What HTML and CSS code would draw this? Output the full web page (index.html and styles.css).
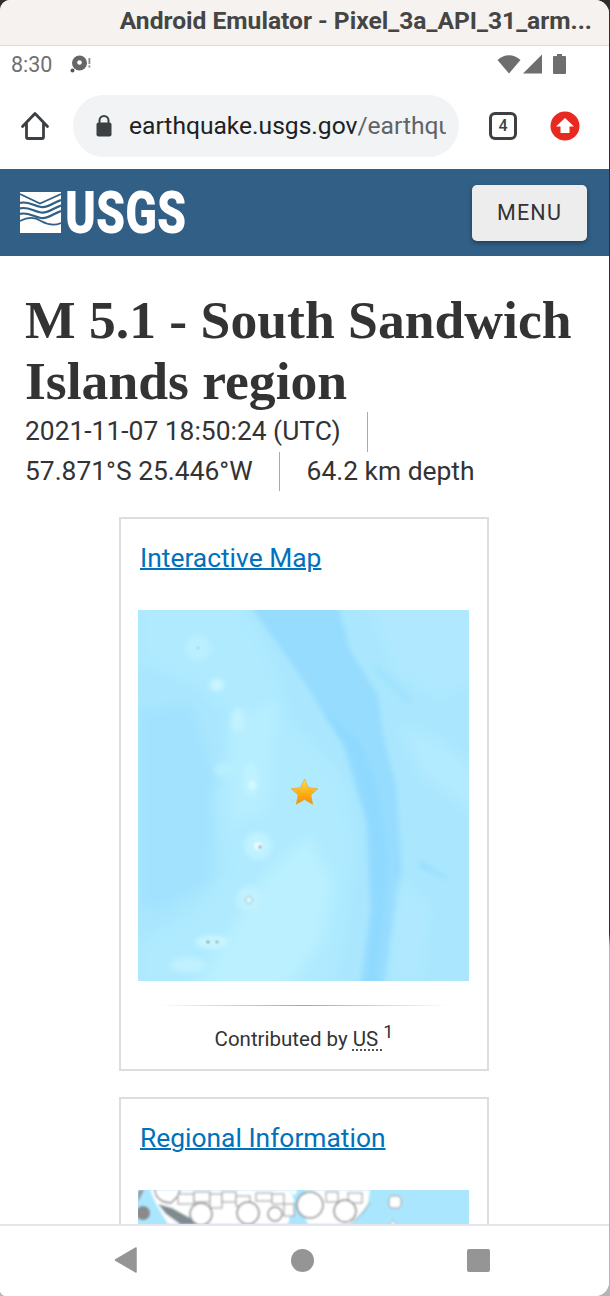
FILE: index.html
```html
<!DOCTYPE html>
<html lang="en">
<head>
<meta charset="utf-8">
<title>M 5.1 - South Sandwich Islands region</title>
<link rel="stylesheet" href="styles.css">
</head>
<body>
<div class="window">
  <div class="titlebar"><span class="title-text">Android Emulator - Pixel_3a_API_31_arm...</span></div>
  <div class="statusbar">
    <span class="clock">8:30</span>
    <svg class="debug-icon" width="22" height="18" viewBox="0 0 22 18"><circle cx="9.500" cy="8" r="7.500" fill="#666"/><circle cx="9.500" cy="7.500" r="2.300" fill="#fff"/><circle cx="2.500" cy="15.500" r="2" fill="#555"/><rect x="18.500" y="3" width="1.800" height="6" fill="#888"/><rect x="18.500" y="10.500" width="1.800" height="2" fill="#888"/></svg>
    <span class="status-spacer"></span>
    <svg class="wifi-icon" width="24" height="20" viewBox="0 0 24 20"><path d="M0.500 6 C7 -0.500 17 -0.500 23.500 6 L12 19.500 Z" fill="#6e6e6e"/></svg>
    <svg class="signal-icon" width="20" height="20" viewBox="0 0 20 20"><path d="M0 19.500 L19 0.500 V19.500 Z" fill="#6e6e6e"/></svg>
    <svg class="battery-icon" width="13" height="20" viewBox="0 0 13 20"><path d="M4 0 H9 V2 H12 a1 1 0 0 1 1 1 V19 a1 1 0 0 1 -1 1 H1 a1 1 0 0 1 -1 -1 V3 a1 1 0 0 1 1 -1 H4 Z" fill="#6e6e6e"/></svg>
  </div>
  <div class="toolbar">
    <svg class="home-icon" width="30" height="30" viewBox="0 0 30 30"><path d="M2.500 15.500 L15 2.500 L27.500 15.500 M6.500 12.500 V26 a1.500 1.500 0 0 0 1.500 1.500 H22 a1.500 1.500 0 0 0 1.500 -1.500 V12.500" fill="none" stroke="#3c4043" stroke-width="2.800" stroke-linejoin="round" stroke-linecap="round"/></svg>
    <div class="urlbar">
      <svg class="lock-icon" width="16" height="24" viewBox="0 0 16 24"><path d="M3.500 9 V6.500 a4.500 4.500 0 0 1 9 0 V9" fill="none" stroke="#3c4043" stroke-width="2"/><rect x="0.500" y="8.500" width="15" height="14" rx="2" fill="#3c4043"/></svg>
      <span class="url"><span class="url-host">earthquake.usgs.gov</span><span class="url-path">/earthquake</span></span>
    </div>
    <div class="tabs"><span>4</span></div>
    <svg class="update-icon" width="30" height="30" viewBox="0 0 30 30"><circle cx="15" cy="15" r="14.500" fill="#e8291f"/><path d="M15 7 L24 15.500 H19.500 V22 H10.500 V15.500 H6 Z" fill="#fff"/></svg>
  </div>
  <header class="usgs-bar">
    <div class="logo">
      <svg class="logo-mark" width="41" height="41" viewBox="0 0 41 41">
        <rect width="41" height="41" fill="#fff"/>
        <g fill="none" stroke="#315f85">
          <path d="M0 2 L20 11.500 L41 2" stroke-width="1.600"/>
          <path d="M0 11 C8 8.500 13 14 21 15 C29 16 34 10 41 8" stroke-width="2.200"/>
          <path d="M0 16.500 C8 14 13 19.500 21 20.500 C29 21.500 34 15.500 41 13.500" stroke-width="2.200"/>
          <path d="M0 22 C8 19.500 13 25 21 26 C29 27 34 21 41 19" stroke-width="2.200"/>
          <path d="M0 29 C9 24 15 25 21 29 C28 33 34 34 41 31" stroke-width="1.800"/>
        </g>
      </svg>
      <span class="logo-text-box"><span class="logo-text">USGS</span></span>
    </div>
    <button class="menu-btn">MENU</button>
  </header>
  <main class="content">
    <h1 class="event-title">M 5.1 - South Sandwich Islands region</h1>
    <div class="meta">
      <span class="meta-item">2021-11-07 18:50:24 (UTC)</span>
      <span class="meta-item">57.871°S 25.446°W</span>
      <span class="meta-item meta-last">64.2 km depth</span>
    </div>
    <section class="card">
      <a class="card-link" href="#">Interactive Map</a>
      <svg class="map" width="331" height="371" viewBox="0 0 331 371">
        <defs>
          <filter id="b8" x="-20%" y="-20%" width="140%" height="140%"><feGaussianBlur stdDeviation="6"/></filter>
          <filter id="b3" x="-30%" y="-30%" width="160%" height="160%"><feGaussianBlur stdDeviation="2.500"/></filter>
          <filter id="b1" x="-50%" y="-50%" width="200%" height="200%"><feGaussianBlur stdDeviation="1"/></filter>
          <clipPath id="mapclip"><rect width="331" height="371"/></clipPath>
          <linearGradient id="stargrad" x1="0" y1="0" x2="0" y2="1"><stop offset="0" stop-color="#fde05a"/><stop offset="0.55" stop-color="#fdb015"/><stop offset="1" stop-color="#f98a08"/></linearGradient>
        </defs>
        <g clip-path="url(#mapclip)">
          <rect width="331" height="371" fill="#aae7fe"/>
          <path d="M0 100 L55 95 L78 170 L72 270 L25 300 L0 295 Z" fill="#a2e2fe" filter="url(#b8)"/>
          <path d="M0 -10 L100 -10 L135 55 L150 110 L205 170 L215 240 L205 320 L195 380 L0 380 L0 335 L60 300 L90 260 L75 190 L105 120 L60 75 L0 50 Z" fill="#afeaff" filter="url(#b8)"/>
          <path d="M125 265 L170 225 L195 270 L185 330 L150 380 L55 380 Z" fill="#baf0ff" filter="url(#b8)"/>
          <path d="M90 110 L140 90 L130 200 L95 215 Z" fill="#b6eeff" filter="url(#b8)"/>
          <path d="M112 -5 L200 -5 L212 40 L240 85 L246 130 L258 175 L264 260 L252 330 L246 376 L222 376 L232 300 L228 210 L205 135 L165 70 Z" fill="#96dcff" filter="url(#b3)"/>
          <path d="M185 100 L222 130 L240 180 L250 250 L243 330 L238 376 L228 376 L236 300 L232 215 L212 140 Z" fill="#8fd9ff" filter="url(#b3)"/>
          <path d="M232 -5 L340 -5 L340 70 L300 85 L260 60 Z" fill="#b0e9ff" filter="url(#b8)"/>
          <path d="M262 115 L300 130 L340 160 L340 205 L285 165 Z" fill="#b2eaff" filter="url(#b8)"/>
          <path d="M280 258 L310 270 L311 268 L282 250 Z" fill="#9adfff" filter="url(#b3)"/>
          <path d="M262 270 L290 300 L280 371 L258 371 Z" fill="#b0e9ff" filter="url(#b8)"/>
          <path d="M235 60 L270 95 L275 90 L240 55 Z" fill="#a0e2ff" filter="url(#b3)"/>
          <ellipse cx="60" cy="38" rx="13" ry="13" fill="#baefff" filter="url(#b3)"/>
          <ellipse cx="79" cy="75" rx="7" ry="6" fill="#ccf6ff" filter="url(#b3)"/>
          <ellipse cx="100" cy="110" rx="7" ry="12" fill="#c2f2ff" filter="url(#b3)"/>
          <ellipse cx="113" cy="170" rx="8" ry="18" fill="#bff2ff" filter="url(#b3)"/>
          <ellipse cx="87" cy="160" rx="11" ry="7" fill="#b8efff" filter="url(#b3)"/>
          <ellipse cx="114" cy="175" rx="4" ry="5" fill="#d0f8ff" filter="url(#b1)"/>
          <ellipse cx="120" cy="236" rx="14" ry="14" fill="#c0f2ff" filter="url(#b3)"/>
          <ellipse cx="120" cy="236" rx="4" ry="4" fill="#e8fbff" filter="url(#b1)"/>
          <circle cx="122" cy="237" r="1.200" fill="#5d7482" filter="url(#b1)"/>
          <ellipse cx="111" cy="289" rx="13" ry="13" fill="#c0f1ff" filter="url(#b3)"/>
          <circle cx="111" cy="290" r="3.500" fill="#e4f8fc" stroke="#9ac4d2" stroke-width="1" filter="url(#b1)"/>
          <ellipse cx="74" cy="332" rx="16" ry="7" fill="#c8f5ff" filter="url(#b3)"/>
          <circle cx="70" cy="332" r="1.300" fill="#64808e" filter="url(#b1)"/>
          <circle cx="79" cy="332" r="1.300" fill="#7d98a5" filter="url(#b1)"/>
          <circle cx="60" cy="38" r="1" fill="#93b7c5" filter="url(#b1)"/>
          <ellipse cx="50" cy="355" rx="18" ry="8" fill="#bff1ff" filter="url(#b3)"/>
          <polygon points="166.500,169 170.400,177.700 179.800,178.800 172.800,185 174.700,194.300 166.500,189.600 158.300,194.300 160.200,185 153.200,178.800 162.600,177.700" fill="url(#stargrad)" stroke="#e8a020" stroke-opacity="0.6" stroke-width="1" stroke-linejoin="round"/>
        </g>
      </svg>
      <hr class="divider">
      <p class="credit">Contributed by <abbr class="credit-abbr">US </abbr><sup class="credit-sup">1</sup></p>
    </section>
    <section class="card">
      <a class="card-link" href="#">Regional Information</a>
      <svg class="map" width="331" height="371" viewBox="0 0 331 371">
        <defs><filter id="r1" x="-20%" y="-20%" width="140%" height="140%"><feGaussianBlur stdDeviation="0.900"/></filter></defs>
        <rect width="331" height="371" fill="#aae7fe"/>
        <g filter="url(#r1)">
          <path d="M12 0 H152 L156 10 L150 34 H30 L18 14 Z" fill="#fff"/>
          <path d="M162 16 L168 0 H232 L230 14 L214 34 H170 Z" fill="#fff"/>
          <path d="M152 0 H160 L156 6 Z" fill="#fff"/>
          <path d="M17 0 C17 9 26 13 33 13 L40 6 L42 0" fill="#fff" stroke="#8c8c8c" stroke-width="1.500"/>
          <path d="M20 14 L34 18 L52 28 L60 34 H42 L28 24 Z" fill="#7f8b90"/>
          <circle cx="5" cy="23" r="7" fill="#8a8a8a"/>
          <path d="M0 12 L6 0 H2 L0 2 Z" fill="#9a9a9a"/>
          <g fill="#fff" stroke="#9a9a9a" stroke-width="1.100">
            <rect x="40" y="4" width="16" height="10"/>
            <rect x="56" y="2" width="16" height="10"/>
            <rect x="72" y="4" width="12" height="14"/>
            <rect x="84" y="2" width="14" height="10"/>
            <rect x="98" y="6" width="14" height="10"/>
            <rect x="118" y="3" width="16" height="8"/>
            <rect x="134" y="4" width="12" height="10"/>
            <rect x="146" y="14" width="10" height="12"/>
            <rect x="188" y="2" width="12" height="10"/>
            <rect x="210" y="3" width="14" height="10"/>
            <rect x="251" y="6" width="12" height="12" rx="4"/>
          </g>
          <g fill="#fff" stroke="#858585" stroke-width="1.500">
            <circle cx="63" cy="24" r="11"/>
            <circle cx="110" cy="23" r="11"/>
            <circle cx="137" cy="24" r="7"/>
            <circle cx="172" cy="15" r="13"/>
            <circle cx="207" cy="21" r="11"/>
          </g>
          <path d="M232 12 L226 22 L212 34" fill="none" stroke="#9a9a9a"/>
          <path d="M252 34 l3 -4 l3 4" fill="#fff" stroke="#aaa"/>
        </g>
      </svg>
    </section>
  </main>
  <nav class="navbar">
    <svg class="nav-back" width="24" height="26" viewBox="0 0 24 26"><path d="M22 1 V25 L1.500 13 Z" fill="#959595" stroke="#959595" stroke-width="1.500" stroke-linejoin="round"/></svg>
    <span class="nav-home"></span>
    <span class="nav-recent"></span>
  </nav>
</div>
</body>
</html>
```
FILE: styles.css
```css
* { box-sizing: border-box; }
html, body { margin: 0; padding: 0; }
html { background: linear-gradient(to bottom, #2e2e2e 0, #2e2e2e 72%, #b5b5b5 73%, #b5b5b5 100%); }
body { width: 610px; height: 1296px; overflow: hidden; font-family: Roboto, "Liberation Sans", sans-serif; }
.window {
  width: 609px;
  height: 1296px;
  display: flex;
  flex-direction: column;
  background: #fff;
  border-radius: 10px 14px 14px 6px;
  overflow: hidden;
}
.titlebar {
  height: 46px;
  flex: none;
  background: #f5f2ef;
  border-bottom: 1px solid #dfdcd9;
  display: flex;
  align-items: center;
  justify-content: flex-end;
  padding: 0 17px 4px 0;
}
.title-text { font: 700 24.600px Roboto, sans-serif; color: #454545; white-space: nowrap; }
.statusbar {
  height: 36px;
  flex: none;
  display: flex;
  align-items: center;
  padding: 0 43px 0 11px;
  background: #fff;
}
.clock { font-size: 21.500px; color: #707070; }
.debug-icon { margin-left: 18px; }
.status-spacer { flex: 1; }
.signal-icon { margin-left: 2px; }
.battery-icon { margin-left: 10px; }
.toolbar {
  height: 87px;
  flex: none;
  display: flex;
  align-items: center;
  padding: 0 29px 0 20px;
  background: #fff;
}
.home-icon, .lock-icon, .update-icon { flex: none; }
.urlbar {
  width: 386px;
  flex: none;
  height: 62px;
  margin-left: 23px;
  border-radius: 31px;
  background: #f1f3f4;
  display: flex;
  align-items: center;
  padding: 0 13px 0 23px;
  overflow: hidden;
}
.url { margin-left: 17px; font-size: 24.600px; white-space: nowrap; overflow: hidden; }
.url-host { color: #202124; }
.url-path { color: #5f6368; }
.tabs {
  width: 28px;
  height: 28px;
  flex: none;
  margin-left: 30px;
  border: 3px solid #3c4043;
  border-radius: 6px;
  display: flex;
  align-items: center;
  justify-content: center;
  font: 500 16px Roboto, sans-serif;
  color: #3c4043;
}
.update-icon { margin-left: 33px; }
.usgs-bar {
  height: 87px;
  flex: none;
  background: #315f85;
  display: flex;
  align-items: center;
  justify-content: space-between;
  padding: 0 22px 0 20px;
}
.logo { display: flex; align-items: center; }
.logo-text-box { display: block; width: 117px; height: 42px; margin-left: 4px; overflow: visible; }
.logo-text {
  display: block;
  font: 900 59px/42px Roboto, sans-serif;
  color: #fff;
  transform: scaleX(0.79);
  transform-origin: left center;
  white-space: nowrap;
}
.menu-btn {
  width: 115px;
  height: 56px;
  border: 0;
  border-radius: 5px;
  background: #ededed;
  box-shadow: 0 2px 4px rgba(0,0,0,.35);
  font: 400 21.500px Roboto, sans-serif;
  letter-spacing: 1.200px;
  color: #333;
  padding: 0;
}
.content {
  flex: 1;
  min-height: 0;
  overflow: hidden;
  padding: 34px 24px 0 25px;
}
.event-title {
  margin: 0;
  font: 700 53.600px/61px "Liberation Serif", serif;
  color: #333;
}
.meta {
  display: flex;
  flex-wrap: wrap;
  font-size: 26.400px;
  line-height: 39.500px;
  color: #333;
}
.meta-item { padding-right: 26px; border-right: 1px solid #aaa; white-space: nowrap; }
.meta-last { padding-left: 27px; padding-right: 0; border-right: 0; }
.card {
  width: 370px;
  margin: 26px 0 0 94px;
  border: 2px solid #ddd;
  padding: 20px 17px 0 17px;
}
.card + .card { margin-top: 26px; }
.card-link {
  display: block;
  font-size: 26.400px;
  line-height: 38px;
  color: #0071bc;
  text-decoration: underline;
  text-decoration-thickness: 2px;
  margin-left: 2px;
}
.map { display: block; margin-top: 33px; }
.divider {
  height: 1px;
  border: 0;
  margin: 24px 20px 0 20px;
  background: linear-gradient(to right, rgba(0,0,0,0), rgba(0,0,0,.35), rgba(0,0,0,0));
}
.credit {
  margin: 18px 0 15px;
  text-align: center;
  font-size: 20.500px;
  line-height: 30px;
  color: #333;
}
.credit-abbr { text-decoration: underline dotted #555; text-underline-offset: 3px; white-space: pre; }
.credit-sup { font-size: 18px; line-height: 0; }
.navbar {
  height: 72px;
  flex: none;
  border-top: 2px solid #e4e4ea;
  background: #fff;
  display: flex;
  align-items: center;
  padding: 0 0 2px 114px;
}
.nav-home {
  width: 23px;
  height: 23px;
  border-radius: 50%;
  background: #959595;
  margin-left: 153px;
}
.nav-recent {
  width: 23px;
  height: 23px;
  border-radius: 2px;
  background: #959595;
  margin-left: 153px;
}
```
